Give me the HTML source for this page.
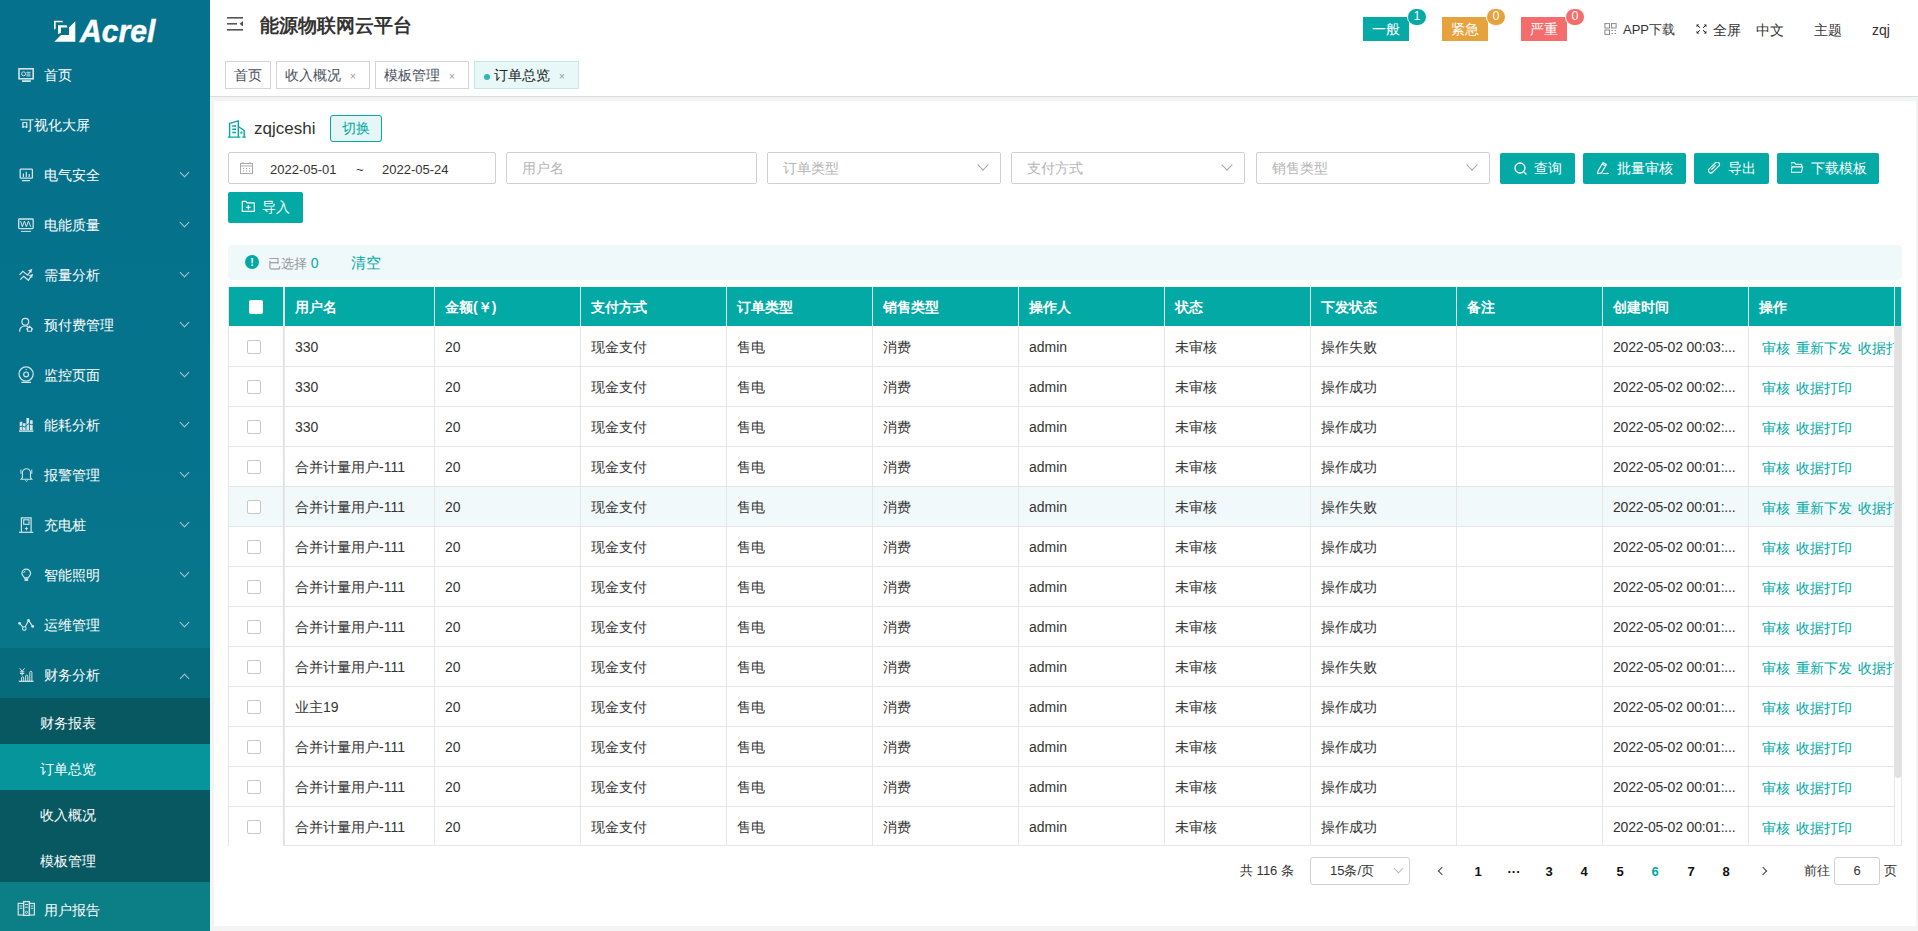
<!DOCTYPE html><html><head><meta charset="utf-8"><style>
*{box-sizing:border-box;margin:0;padding:0}
svg{display:block}
html,body{width:1918px;height:931px;overflow:hidden}
body{position:relative;background:#f4f4f5;font-family:"Liberation Sans",sans-serif;font-size:14px;color:#333}
.a{position:absolute}
.side{left:0;top:0;width:210px;height:931px;background:linear-gradient(#05718c,#06738c 50%,#08778a 70%,#0b7c87)}
.mi{position:absolute;left:0;width:210px;height:50px;color:#fff;font-size:14px}
.mi .t{position:absolute;left:44px;top:2px;line-height:50px;white-space:nowrap}
.mi .ar{position:absolute;left:180.5px;top:20.5px;width:7px;height:7px;border-right:1px solid #a9c8d1;border-bottom:1px solid #a9c8d1;transform:rotate(45deg)}
.sub{position:absolute;left:0;width:210px;height:46px;color:#fff;line-height:46px}
.sub .t{position:absolute;left:40px;top:2px}
.hdr{left:210px;top:0;width:1708px;height:97px;background:#fff;border-bottom:1px solid #d8dce5}
.card{left:214px;top:101px;width:1702px;height:825px;background:#fff}
.tab{position:absolute;top:61px;height:28px;border:1px solid #d5d5d5;background:#fff;color:#495060;font-size:14px;line-height:26px;padding-left:8px;white-space:nowrap}
.tab .x{position:absolute;font-size:10px;color:#999}
.inp{position:absolute;top:152px;height:32px;border:1px solid #d0d0d0;border-radius:2px;background:#fff}
.ph{position:absolute;left:15px;top:0;line-height:30px;color:#b4b4b4;font-size:14px}
.sel .arr{position:absolute;right:13px;top:8px;width:8px;height:8px;border-right:1px solid #a8a8a8;border-bottom:1px solid #a8a8a8;transform:rotate(45deg)}
.btn{position:absolute;top:153px;height:31px;background:#02a9a5;border-radius:2px;color:#fff;font-size:14px;line-height:31px;white-space:nowrap}
</style></head><body>
<div class="a side">
<div class="a" style="left:79.5px;top:13px;color:#fff;font:italic bold 32px/36px 'Liberation Sans',sans-serif;-webkit-text-stroke:0.5px #fff;transform-origin:0 0;transform:scaleX(0.94)">Acrel</div>
<div class="mi" style="top:48px;"><div class="ic"></div><div class="t" style="left:44px">首页</div></div>
<div class="mi" style="top:98px;"><div class="ic"></div><div class="t" style="left:20px">可视化大屏</div></div>
<div class="mi" style="top:148px;"><div class="ic"></div><div class="t" style="left:44px">电气安全</div><div class="ar"></div></div>
<div class="mi" style="top:198px;"><div class="ic"></div><div class="t" style="left:44px">电能质量</div><div class="ar"></div></div>
<div class="mi" style="top:248px;"><div class="ic"></div><div class="t" style="left:44px">需量分析</div><div class="ar"></div></div>
<div class="mi" style="top:298px;"><div class="ic"></div><div class="t" style="left:44px">预付费管理</div><div class="ar"></div></div>
<div class="mi" style="top:348px;"><div class="ic"></div><div class="t" style="left:44px">监控页面</div><div class="ar"></div></div>
<div class="mi" style="top:398px;"><div class="ic"></div><div class="t" style="left:44px">能耗分析</div><div class="ar"></div></div>
<div class="mi" style="top:448px;"><div class="ic"></div><div class="t" style="left:44px">报警管理</div><div class="ar"></div></div>
<div class="mi" style="top:498px;"><div class="ic"></div><div class="t" style="left:44px">充电桩</div><div class="ar"></div></div>
<div class="mi" style="top:548px;"><div class="ic"></div><div class="t" style="left:44px">智能照明</div><div class="ar"></div></div>
<div class="mi" style="top:598px;"><div class="ic"></div><div class="t" style="left:44px">运维管理</div><div class="ar"></div></div>
<div class="mi" style="top:648px;background:#066b7d;"><div class="ic"></div><div class="t" style="left:44px">财务分析</div><div class="ar" style="top:27px;transform:rotate(225deg)"></div></div>
<div class="sub" style="top:698px;background:#085862"><div class="t">财务报表</div></div>
<div class="sub" style="top:744px;background:#05959a"><div class="t">订单总览</div></div>
<div class="sub" style="top:790px;background:#085862"><div class="t">收入概况</div></div>
<div class="sub" style="top:836px;background:#085862"><div class="t">模板管理</div></div>
<div class="mi" style="top:882px;background:#0c7e86"><div class="t" style="top:3px">用户报告</div></div>
<svg class="a" style="left:0;top:0" width="210" height="931" viewBox="0 0 210 931"><g fill="#fff"><path d="M75.3 21.2V41.8H54.3L61 35H69V27.5Z"/><path d="M54 20.8H62.2L63.2 22.3H55.7V28.5L54 29.8Z"/><path d="M58 25.2H66.6L67.6 27.5H60.9V33L58 34.2Z"/></g><g fill="none" stroke="#d3e4e9" stroke-width="1.2"><rect x="19" y="68.8" width="14.2" height="10" stroke-width="1.6"/><path d="M22 81.1H30.8" stroke-width="1.8"/><circle cx="23.6" cy="73.8" r="2" stroke-width="1"/><path d="M26.5 72.3H30.5M26.5 74.1H30.5M26.5 75.9H30.5" stroke-width="1"/><rect x="20.2" y="169.2" width="12.2" height="9" rx="0.8" stroke-width="1.3"/><path d="M22 180.6H30M23.4 177V173.5M26.3 177V171.7M29.2 177V174"/><rect x="18.7" y="219" width="14.5" height="9.6" rx="0.8" stroke-width="1.3"/><path d="M21 231.4H31M20.6 221L22.4 226.8L24.4 221L26.4 226.8L28.4 221L30.8 226.8" stroke-width="1"/><path d="M19.5 274.8L22.9 271.4L27.7 275.2L30.6 271" stroke-width="1.2"/><path d="M27.9 270.4L32.3 268.7L31.3 273.1Z" fill="#d3e4e9" stroke="none"/><path d="M20.3 279.6L23.6 276.3L28.4 280.3L31.4 275.9" stroke-width="1.2"/><path d="M28.7 275.4L33.1 273.7L32.1 278.1Z" fill="#d3e4e9" stroke="none"/><circle cx="25.3" cy="321.8" r="3.4"/><path d="M19.6 331.8C19.6 328.2 22 326 25.3 326C26.3 326 27.2 326.2 28 326.6"/><path d="M26.2 329.4L29.6 326.3L33 329.4M27.6 328.2V331.2H31.6V328.2" stroke-width="1.1"/><circle cx="26.1" cy="374" r="7.1"/><circle cx="26.1" cy="374.4" r="2.4"/><path d="M21.3 382.4H31M25.6 369.5H26.8"/><path d="M19 431.1H33.4" stroke-width="1.5"/><g fill="#d3e4e9" stroke="none"><rect x="19.7" y="421.8" width="2.7" height="8.2"/><rect x="23" y="423.2" width="2.6" height="6.8"/><rect x="26.4" y="418" width="2.7" height="12"/><rect x="30" y="420.2" width="2.7" height="9.8"/></g><path d="M19.4 426.6L22.6 426.2L25.2 427.2L28.2 423.8L31.4 424.6L33.2 424.3" stroke="#05718c" stroke-width="0.9"/><path d="M22.4 477.6V472.8A4.05 4.05 0 0 1 30.5 472.8V477.6L31.8 479.2H21.1Z" stroke-width="1.1"/><path d="M25.3 480.6Q26.45 481.9 27.6 480.6M20.9 469.6V473.8M31.8 469.6V473.8" stroke-width="1"/><path d="M21.4 532V517.8H31.1V532" stroke-width="1.2"/><rect x="23.7" y="519.8" width="5.3" height="4.5" stroke-width="1.1"/><path d="M26.4 526.2L27 528L28.4 528.6L27 529.2L26.4 531L25.8 529.2L24.4 528.6L25.8 528Z" fill="#d3e4e9" stroke="none"/><path d="M19 532.3H33.3" stroke-width="1.2"/><path d="M24.6 577.9C23.9 576.6 21.9 575.3 21.9 573.5A4.35 4.35 0 0 1 30.6 573.5C30.6 575.3 28.7 576.6 28 577.9Z" stroke-width="1.2"/><rect x="24.5" y="578.3" width="3.6" height="2.6" fill="#d3e4e9" stroke="none"/><path d="M23.7 572.9A2.4 2.4 0 0 1 25.5 571" stroke-width="1"/><path d="M19.6 623.3L23 627.2M25.2 626.9L28.5 620.4L32.7 626.4" stroke-width="1.1"/><circle cx="24.3" cy="628.6" r="1.8" stroke-width="1.1"/><circle cx="19.6" cy="623.3" r="1.4" fill="#d3e4e9" stroke="none"/><circle cx="28.5" cy="620.4" r="1.4" fill="#d3e4e9" stroke="none"/><circle cx="32.7" cy="626.4" r="1.4" fill="#d3e4e9" stroke="none"/><path d="M18.8 681.3H33.5" stroke-width="1.3"/><path d="M21.6 681V677.9A1.05 1.05 0 0 1 23.7 677.9V681M25.7 681V676.1A1.05 1.05 0 0 1 27.8 676.1V681M29.8 681V672.3A1.05 1.05 0 0 1 31.9 672.3V681" stroke-width="1"/><path d="M19.6 668.3L22.1 671.2L24.6 668.3M22.1 671.2V675.6M19.9 671.8H24.3M19.9 673.5H24.3" stroke-width="1"/><rect x="23.6" y="901.6" width="5.8" height="13.8" stroke-width="1.3"/><rect x="18.2" y="903.4" width="5.4" height="11.6"/><rect x="29.4" y="903.4" width="5" height="11.6"/><path d="M25 904.5H28M25 907.2H28M19.6 906H22.2M30.8 906H33.2M19.6 908.3H22.2M30.8 908.3H33.2" stroke-width="1"/><circle cx="26.5" cy="912.3" r="1.1" stroke-width="0.9"/></g></svg>
</div>
<div class="a hdr"></div>
<div class="a" style="left:227px;top:17px;width:16px;height:14px"><svg width="16" height="14" viewBox="0 0 16 14"><rect x="0" y="0" width="16" height="1.6" fill="#555"/><rect x="0" y="6" width="10" height="1.6" fill="#555"/><rect x="0" y="12" width="16" height="1.6" fill="#555"/><path d="M16 4L12.5 6.8 16 9.6z" fill="#555"/></svg></div>
<div class="a" style="left:260px;top:13px;font-size:19px;font-weight:bold;line-height:26px;color:#333">能源物联网云平台</div>
<div class="tab" style="left:225px;width:46px;">首页</div>
<div class="tab" style="left:276px;width:94px;">收入概况<span class="x" style="left:73px;top:2px">×</span></div>
<div class="tab" style="left:375px;width:94px;">模板管理<span class="x" style="left:73px;top:2px">×</span></div>
<div class="tab" style="left:474px;width:105px;background:#e8f7f7;border-color:#c2e9e7;color:#222;padding-left:19px;"><span class="a" style="left:8.5px;top:11.5px;width:6px;height:6px;border-radius:50%;background:#2fb7b1"></span>订单总览<span class="x" style="left:84px;top:2px">×</span></div>
<div class="a" style="left:1363px;top:17px;width:46px;height:24px;background:#05a9a5;color:#fff;font-size:14px;line-height:24px;text-align:center">一般</div>
<div class="a" style="left:1407px;top:8px;width:20px;height:18px;border-radius:9px;background:#05a9a5;border:1px solid #fff;color:#fff;font-size:12.5px;line-height:15px;text-align:center">1</div>
<div class="a" style="left:1442px;top:17px;width:46px;height:24px;background:#e6a23c;color:#fff;font-size:14px;line-height:24px;text-align:center">紧急</div>
<div class="a" style="left:1486px;top:8px;width:20px;height:18px;border-radius:9px;background:#e6a23c;border:1px solid #fff;color:#fff;font-size:12.5px;line-height:15px;text-align:center">0</div>
<div class="a" style="left:1521px;top:17px;width:46px;height:24px;background:#f56c6c;color:#fff;font-size:14px;line-height:24px;text-align:center">严重</div>
<div class="a" style="left:1565px;top:8px;width:20px;height:18px;border-radius:9px;background:#f56c6c;border:1px solid #fff;color:#fff;font-size:12.5px;line-height:15px;text-align:center">0</div>
<div class="a" style="left:1604px;top:23px;width:13px;height:12px"><svg style="display:block" width="13" height="12" viewBox="0 0 13 12" fill="none" stroke="#8a8a8a" stroke-width="1"><rect x=".9" y=".6" width="4.6" height="4.4"/><rect x="7.5" y=".6" width="4.6" height="4.4"/><rect x=".9" y="7" width="4.6" height="4.4"/><path d="M7.5 7.5h1.5M10.5 7.5h1.5M7.5 10.5h1.5M10.5 10.5h1.5" stroke-width="1.2"/></svg></div>
<div class="a" style="left:1623px;top:21px;font-size:13px;line-height:18px;color:#333">APP下载</div>
<svg class="a" style="left:1696px;top:24px" width="11" height="10" viewBox="0 0 11 10" fill="none" stroke="#222" stroke-width="1"><path d="M1.2 1.2L4 3.8M10 1.2L7 3.8M1.2 8.8L4 6.2M10 8.8L7 6.2"/><path d="M.6 .6h2.6L.6 3.2z M10.4 .6h-2.6l2.6 2.6z M.6 9.4h2.6L.6 6.8z M10.4 9.4h-2.6l2.6-2.6z" fill="#222" stroke="none"/></svg>
<div class="a" style="left:1713px;top:21px;font-size:14px;line-height:18px;color:#333">全屏</div>
<div class="a" style="left:1756px;top:21px;font-size:14px;line-height:18px;color:#333">中文</div>
<div class="a" style="left:1814px;top:21px;font-size:14px;line-height:18px;color:#333">主题</div>
<div class="a" style="left:1872px;top:21px;font-size:14px;line-height:18px;color:#333">zqj</div>
<div class="a card"></div>
<svg class="a" style="left:224px;top:116px" width="26" height="24" viewBox="0 0 26 24" fill="none" stroke="#02a9a5" stroke-width="1.4"><path d="M5.6 20.8V7.4L14.3 4.8V20.8M14.3 10.5L20.2 14.5V20.8M4 21.1H16.4M18.2 21.1H21.8" stroke-linejoin="round"/><path d="M8.3 10H12M8.3 13.3H12M8.3 16.4H12" stroke-width="1.5"/><circle cx="17.4" cy="16.6" r=".5"/></svg>
<div class="a" style="left:254px;top:117px;font-size:17px;line-height:24px;color:#333">zqjceshi</div>
<div class="a" style="left:330px;top:115px;width:52px;height:27px;border:1px solid #02a9a5;border-radius:3px;background:#e6f6f6;color:#02a9a5;font-size:14px;line-height:25px;text-align:center">切换</div>
<div class="inp" style="left:228px;width:268px"><div class="a" style="left:11px;top:9px;width:13px;height:12px"><svg width="13" height="12" viewBox="0 0 13 12" fill="none" stroke="#aaa" stroke-width="1"><rect x=".5" y="1.5" width="12" height="10"/><path d="M.5 4h12M3 0v2M10 0v2M3 6.5h1M6 6.5h1M9 6.5h1M3 9h1M6 9h1M9 9h1"/></svg></div><div class="a" style="left:41px;top:2px;line-height:30px;font-size:13px;color:#333">2022-05-01</div><div class="a" style="left:127px;top:2px;line-height:30px;font-size:13px;color:#333">~</div><div class="a" style="left:153px;top:2px;line-height:30px;font-size:13px;color:#333">2022-05-24</div></div>
<div class="inp" style="left:506px;width:251px"><div class="ph">用户名</div></div>
<div class="inp sel" style="left:767px;width:234px"><div class="ph">订单类型</div><div class="arr"></div></div>
<div class="inp sel" style="left:1011px;width:234px"><div class="ph">支付方式</div><div class="arr"></div></div>
<div class="inp sel" style="left:1256px;width:234px"><div class="ph">销售类型</div><div class="arr"></div></div>
<div class="btn" style="left:1500px;width:75px"><svg class="a" style="left:14px;top:9px" width="14" height="14" viewBox="0 0 14 14" fill="none" stroke="#fff" stroke-width="1.3"><circle cx="6" cy="6" r="5"/><path d="M10 10l2.5 2.5"/></svg><span class="a" style="left:34px;top:0">查询</span></div>
<div class="btn" style="left:1583px;width:103px"><svg class="a" style="left:14px;top:9px" width="14" height="14" viewBox="0 0 14 14" fill="none" stroke="#fff" stroke-width="1.3"><path d="M0.7 11.7L1.1 8.9L6 0.5L9.4 2.5L4.5 10.9Z M5.3 2L8.6 3.9" stroke-width="1.1" stroke-linejoin="round"/><path d="M5.6 11.5H12" stroke-width="1.1"/></svg><span class="a" style="left:34px;top:0">批量审核</span></div>
<div class="btn" style="left:1694px;width:75px"><svg class="a" style="left:14px;top:9px" width="14" height="14" viewBox="0 0 14 14" fill="none" stroke="#fff" stroke-width="1.3"><path d="M2.9 8.6L9.1 2.4" stroke-width="5.8" stroke-linecap="round"/><path d="M2.9 8.6L9.1 2.4" stroke="#02a9a5" stroke-width="3.6" stroke-linecap="round"/><path d="M3.4 7.6L7.6 3.4" stroke-width="1.2"/></svg><span class="a" style="left:34px;top:0">导出</span></div>
<div class="btn" style="left:1777px;width:102px"><svg class="a" style="left:14px;top:9px" width="14" height="14" viewBox="0 0 14 14" fill="none" stroke="#fff" stroke-width="1.3"><path d="M-0.2 10.2V0.8H3.6L5 2.4H10.6V4.6" stroke-width="1.1" stroke-linejoin="round"/><path d="M-0.2 10.2L1.2 4.9H11.8L10.4 10.2Z" stroke-width="1.1" stroke-linejoin="round"/></svg><span class="a" style="left:34px;top:0">下载模板</span></div>
<div class="btn" style="left:228px;top:192px;width:75px"><svg class="a" style="left:13px;top:8px" width="14" height="14" viewBox="0 0 14 14" fill="none" stroke="#fff" stroke-width="1.3"><path d="M1.3 1.3H4.8L6.2 2.9H13.3V11.4H1.3Z" stroke-width="1.2" stroke-linejoin="round"/><path d="M7.3 4.9V9.7M4.9 7.3H9.7" stroke-width="1.1"/></svg><span class="a" style="left:34px;top:0">导入</span></div>
<div class="a" style="left:228px;top:245px;width:1674px;height:35px;background:#f0f9fa;border-radius:4px"></div>
<div class="a" style="left:245px;top:255px;width:14px;height:14px;border-radius:50%;background:#02a9a5;color:#fff;font-size:11px;font-weight:bold;line-height:14px;text-align:center">!</div>
<div class="a" style="left:268px;top:254px;font-size:13px;line-height:18px;color:#909399">已选择 <span style="color:#02a9a5;font-size:14px">0</span></div>
<div class="a" style="left:351px;top:253px;font-size:15px;line-height:20px;color:#02a9a5">清空</div>
<div class="a" style="left:228px;top:287px;width:1673px;height:39px;background:#02a9a5"></div>
<div class="a" style="left:295px;top:288px;line-height:39px;color:#fff;font-weight:bold;font-size:14px">用户名</div>
<div class="a" style="left:445px;top:288px;line-height:39px;color:#fff;font-weight:bold;font-size:14px">金额(￥)</div>
<div class="a" style="left:591px;top:288px;line-height:39px;color:#fff;font-weight:bold;font-size:14px">支付方式</div>
<div class="a" style="left:737px;top:288px;line-height:39px;color:#fff;font-weight:bold;font-size:14px">订单类型</div>
<div class="a" style="left:883px;top:288px;line-height:39px;color:#fff;font-weight:bold;font-size:14px">销售类型</div>
<div class="a" style="left:1029px;top:288px;line-height:39px;color:#fff;font-weight:bold;font-size:14px">操作人</div>
<div class="a" style="left:1175px;top:288px;line-height:39px;color:#fff;font-weight:bold;font-size:14px">状态</div>
<div class="a" style="left:1321px;top:288px;line-height:39px;color:#fff;font-weight:bold;font-size:14px">下发状态</div>
<div class="a" style="left:1467px;top:288px;line-height:39px;color:#fff;font-weight:bold;font-size:14px">备注</div>
<div class="a" style="left:1613px;top:288px;line-height:39px;color:#fff;font-weight:bold;font-size:14px">创建时间</div>
<div class="a" style="left:1759px;top:288px;line-height:39px;color:#fff;font-weight:bold;font-size:14px">操作</div>
<div class="a" style="left:284px;top:287px;width:1px;height:39px;background:#e2e2e2"></div>
<div class="a" style="left:434px;top:287px;width:1px;height:39px;background:#e2e2e2"></div>
<div class="a" style="left:580px;top:287px;width:1px;height:39px;background:#e2e2e2"></div>
<div class="a" style="left:726px;top:287px;width:1px;height:39px;background:#e2e2e2"></div>
<div class="a" style="left:872px;top:287px;width:1px;height:39px;background:#e2e2e2"></div>
<div class="a" style="left:1018px;top:287px;width:1px;height:39px;background:#e2e2e2"></div>
<div class="a" style="left:1164px;top:287px;width:1px;height:39px;background:#e2e2e2"></div>
<div class="a" style="left:1310px;top:287px;width:1px;height:39px;background:#e2e2e2"></div>
<div class="a" style="left:1456px;top:287px;width:1px;height:39px;background:#e2e2e2"></div>
<div class="a" style="left:1602px;top:287px;width:1px;height:39px;background:#e2e2e2"></div>
<div class="a" style="left:1748px;top:287px;width:1px;height:39px;background:#e2e2e2"></div>
<div class="a" style="left:1894px;top:287px;width:1px;height:39px;background:#e2e2e2"></div>
<div class="a" style="left:249px;top:300px;width:14px;height:14px;background:#fff;border-radius:2px"></div>
<div class="a" style="left:228px;top:366px;width:1666px;height:1px;background:#e6e6e6"></div>
<div class="a" style="left:247px;top:340px;width:14px;height:14px;border:1px solid #c8c8c8;border-radius:2px;background:#fff"></div>
<div class="a" style="left:295px;top:327px;line-height:40px;color:#333;">330</div>
<div class="a" style="left:445px;top:327px;line-height:40px;color:#333;">20</div>
<div class="a" style="left:591px;top:327px;line-height:40px;color:#333;">现金支付</div>
<div class="a" style="left:737px;top:327px;line-height:40px;color:#333;">售电</div>
<div class="a" style="left:883px;top:327px;line-height:40px;color:#333;">消费</div>
<div class="a" style="left:1029px;top:327px;line-height:40px;color:#333;">admin</div>
<div class="a" style="left:1175px;top:327px;line-height:40px;color:#333;">未审核</div>
<div class="a" style="left:1321px;top:327px;line-height:40px;color:#333;">操作失败</div>
<div class="a" style="left:1467px;top:327px;line-height:40px;color:#333;"></div>
<div class="a" style="left:1613px;top:327px;line-height:40px;color:#333;letter-spacing:-0.18px;">2022-05-02 00:03:...</div>
<div class="a" style="left:1762px;top:328px;width:132px;overflow:hidden;white-space:nowrap;line-height:40px;color:#02a9a5"><span style="margin-right:6px">审核</span><span style="margin-right:6px">重新下发</span><span style="margin-right:6px">收据打印</span></div>
<div class="a" style="left:228px;top:406px;width:1666px;height:1px;background:#e6e6e6"></div>
<div class="a" style="left:247px;top:380px;width:14px;height:14px;border:1px solid #c8c8c8;border-radius:2px;background:#fff"></div>
<div class="a" style="left:295px;top:367px;line-height:40px;color:#333;">330</div>
<div class="a" style="left:445px;top:367px;line-height:40px;color:#333;">20</div>
<div class="a" style="left:591px;top:367px;line-height:40px;color:#333;">现金支付</div>
<div class="a" style="left:737px;top:367px;line-height:40px;color:#333;">售电</div>
<div class="a" style="left:883px;top:367px;line-height:40px;color:#333;">消费</div>
<div class="a" style="left:1029px;top:367px;line-height:40px;color:#333;">admin</div>
<div class="a" style="left:1175px;top:367px;line-height:40px;color:#333;">未审核</div>
<div class="a" style="left:1321px;top:367px;line-height:40px;color:#333;">操作成功</div>
<div class="a" style="left:1467px;top:367px;line-height:40px;color:#333;"></div>
<div class="a" style="left:1613px;top:367px;line-height:40px;color:#333;letter-spacing:-0.18px;">2022-05-02 00:02:...</div>
<div class="a" style="left:1762px;top:368px;width:132px;overflow:hidden;white-space:nowrap;line-height:40px;color:#02a9a5"><span style="margin-right:6px">审核</span><span style="margin-right:6px">收据打印</span></div>
<div class="a" style="left:228px;top:446px;width:1666px;height:1px;background:#e6e6e6"></div>
<div class="a" style="left:247px;top:420px;width:14px;height:14px;border:1px solid #c8c8c8;border-radius:2px;background:#fff"></div>
<div class="a" style="left:295px;top:407px;line-height:40px;color:#333;">330</div>
<div class="a" style="left:445px;top:407px;line-height:40px;color:#333;">20</div>
<div class="a" style="left:591px;top:407px;line-height:40px;color:#333;">现金支付</div>
<div class="a" style="left:737px;top:407px;line-height:40px;color:#333;">售电</div>
<div class="a" style="left:883px;top:407px;line-height:40px;color:#333;">消费</div>
<div class="a" style="left:1029px;top:407px;line-height:40px;color:#333;">admin</div>
<div class="a" style="left:1175px;top:407px;line-height:40px;color:#333;">未审核</div>
<div class="a" style="left:1321px;top:407px;line-height:40px;color:#333;">操作成功</div>
<div class="a" style="left:1467px;top:407px;line-height:40px;color:#333;"></div>
<div class="a" style="left:1613px;top:407px;line-height:40px;color:#333;letter-spacing:-0.18px;">2022-05-02 00:02:...</div>
<div class="a" style="left:1762px;top:408px;width:132px;overflow:hidden;white-space:nowrap;line-height:40px;color:#02a9a5"><span style="margin-right:6px">审核</span><span style="margin-right:6px">收据打印</span></div>
<div class="a" style="left:228px;top:486px;width:1666px;height:1px;background:#e6e6e6"></div>
<div class="a" style="left:247px;top:460px;width:14px;height:14px;border:1px solid #c8c8c8;border-radius:2px;background:#fff"></div>
<div class="a" style="left:295px;top:447px;line-height:40px;color:#333;">合并计量用户-111</div>
<div class="a" style="left:445px;top:447px;line-height:40px;color:#333;">20</div>
<div class="a" style="left:591px;top:447px;line-height:40px;color:#333;">现金支付</div>
<div class="a" style="left:737px;top:447px;line-height:40px;color:#333;">售电</div>
<div class="a" style="left:883px;top:447px;line-height:40px;color:#333;">消费</div>
<div class="a" style="left:1029px;top:447px;line-height:40px;color:#333;">admin</div>
<div class="a" style="left:1175px;top:447px;line-height:40px;color:#333;">未审核</div>
<div class="a" style="left:1321px;top:447px;line-height:40px;color:#333;">操作成功</div>
<div class="a" style="left:1467px;top:447px;line-height:40px;color:#333;"></div>
<div class="a" style="left:1613px;top:447px;line-height:40px;color:#333;letter-spacing:-0.18px;">2022-05-02 00:01:...</div>
<div class="a" style="left:1762px;top:448px;width:132px;overflow:hidden;white-space:nowrap;line-height:40px;color:#02a9a5"><span style="margin-right:6px">审核</span><span style="margin-right:6px">收据打印</span></div>
<div class="a" style="left:228px;top:487px;width:1666px;height:39px;background:#f2f9fa"></div>
<div class="a" style="left:228px;top:526px;width:1666px;height:1px;background:#e6e6e6"></div>
<div class="a" style="left:247px;top:500px;width:14px;height:14px;border:1px solid #c8c8c8;border-radius:2px;background:#fff"></div>
<div class="a" style="left:295px;top:487px;line-height:40px;color:#333;">合并计量用户-111</div>
<div class="a" style="left:445px;top:487px;line-height:40px;color:#333;">20</div>
<div class="a" style="left:591px;top:487px;line-height:40px;color:#333;">现金支付</div>
<div class="a" style="left:737px;top:487px;line-height:40px;color:#333;">售电</div>
<div class="a" style="left:883px;top:487px;line-height:40px;color:#333;">消费</div>
<div class="a" style="left:1029px;top:487px;line-height:40px;color:#333;">admin</div>
<div class="a" style="left:1175px;top:487px;line-height:40px;color:#333;">未审核</div>
<div class="a" style="left:1321px;top:487px;line-height:40px;color:#333;">操作失败</div>
<div class="a" style="left:1467px;top:487px;line-height:40px;color:#333;"></div>
<div class="a" style="left:1613px;top:487px;line-height:40px;color:#333;letter-spacing:-0.18px;">2022-05-02 00:01:...</div>
<div class="a" style="left:1762px;top:488px;width:132px;overflow:hidden;white-space:nowrap;line-height:40px;color:#02a9a5"><span style="margin-right:6px">审核</span><span style="margin-right:6px">重新下发</span><span style="margin-right:6px">收据打印</span></div>
<div class="a" style="left:228px;top:566px;width:1666px;height:1px;background:#e6e6e6"></div>
<div class="a" style="left:247px;top:540px;width:14px;height:14px;border:1px solid #c8c8c8;border-radius:2px;background:#fff"></div>
<div class="a" style="left:295px;top:527px;line-height:40px;color:#333;">合并计量用户-111</div>
<div class="a" style="left:445px;top:527px;line-height:40px;color:#333;">20</div>
<div class="a" style="left:591px;top:527px;line-height:40px;color:#333;">现金支付</div>
<div class="a" style="left:737px;top:527px;line-height:40px;color:#333;">售电</div>
<div class="a" style="left:883px;top:527px;line-height:40px;color:#333;">消费</div>
<div class="a" style="left:1029px;top:527px;line-height:40px;color:#333;">admin</div>
<div class="a" style="left:1175px;top:527px;line-height:40px;color:#333;">未审核</div>
<div class="a" style="left:1321px;top:527px;line-height:40px;color:#333;">操作成功</div>
<div class="a" style="left:1467px;top:527px;line-height:40px;color:#333;"></div>
<div class="a" style="left:1613px;top:527px;line-height:40px;color:#333;letter-spacing:-0.18px;">2022-05-02 00:01:...</div>
<div class="a" style="left:1762px;top:528px;width:132px;overflow:hidden;white-space:nowrap;line-height:40px;color:#02a9a5"><span style="margin-right:6px">审核</span><span style="margin-right:6px">收据打印</span></div>
<div class="a" style="left:228px;top:606px;width:1666px;height:1px;background:#e6e6e6"></div>
<div class="a" style="left:247px;top:580px;width:14px;height:14px;border:1px solid #c8c8c8;border-radius:2px;background:#fff"></div>
<div class="a" style="left:295px;top:567px;line-height:40px;color:#333;">合并计量用户-111</div>
<div class="a" style="left:445px;top:567px;line-height:40px;color:#333;">20</div>
<div class="a" style="left:591px;top:567px;line-height:40px;color:#333;">现金支付</div>
<div class="a" style="left:737px;top:567px;line-height:40px;color:#333;">售电</div>
<div class="a" style="left:883px;top:567px;line-height:40px;color:#333;">消费</div>
<div class="a" style="left:1029px;top:567px;line-height:40px;color:#333;">admin</div>
<div class="a" style="left:1175px;top:567px;line-height:40px;color:#333;">未审核</div>
<div class="a" style="left:1321px;top:567px;line-height:40px;color:#333;">操作成功</div>
<div class="a" style="left:1467px;top:567px;line-height:40px;color:#333;"></div>
<div class="a" style="left:1613px;top:567px;line-height:40px;color:#333;letter-spacing:-0.18px;">2022-05-02 00:01:...</div>
<div class="a" style="left:1762px;top:568px;width:132px;overflow:hidden;white-space:nowrap;line-height:40px;color:#02a9a5"><span style="margin-right:6px">审核</span><span style="margin-right:6px">收据打印</span></div>
<div class="a" style="left:228px;top:646px;width:1666px;height:1px;background:#e6e6e6"></div>
<div class="a" style="left:247px;top:620px;width:14px;height:14px;border:1px solid #c8c8c8;border-radius:2px;background:#fff"></div>
<div class="a" style="left:295px;top:607px;line-height:40px;color:#333;">合并计量用户-111</div>
<div class="a" style="left:445px;top:607px;line-height:40px;color:#333;">20</div>
<div class="a" style="left:591px;top:607px;line-height:40px;color:#333;">现金支付</div>
<div class="a" style="left:737px;top:607px;line-height:40px;color:#333;">售电</div>
<div class="a" style="left:883px;top:607px;line-height:40px;color:#333;">消费</div>
<div class="a" style="left:1029px;top:607px;line-height:40px;color:#333;">admin</div>
<div class="a" style="left:1175px;top:607px;line-height:40px;color:#333;">未审核</div>
<div class="a" style="left:1321px;top:607px;line-height:40px;color:#333;">操作成功</div>
<div class="a" style="left:1467px;top:607px;line-height:40px;color:#333;"></div>
<div class="a" style="left:1613px;top:607px;line-height:40px;color:#333;letter-spacing:-0.18px;">2022-05-02 00:01:...</div>
<div class="a" style="left:1762px;top:608px;width:132px;overflow:hidden;white-space:nowrap;line-height:40px;color:#02a9a5"><span style="margin-right:6px">审核</span><span style="margin-right:6px">收据打印</span></div>
<div class="a" style="left:228px;top:686px;width:1666px;height:1px;background:#e6e6e6"></div>
<div class="a" style="left:247px;top:660px;width:14px;height:14px;border:1px solid #c8c8c8;border-radius:2px;background:#fff"></div>
<div class="a" style="left:295px;top:647px;line-height:40px;color:#333;">合并计量用户-111</div>
<div class="a" style="left:445px;top:647px;line-height:40px;color:#333;">20</div>
<div class="a" style="left:591px;top:647px;line-height:40px;color:#333;">现金支付</div>
<div class="a" style="left:737px;top:647px;line-height:40px;color:#333;">售电</div>
<div class="a" style="left:883px;top:647px;line-height:40px;color:#333;">消费</div>
<div class="a" style="left:1029px;top:647px;line-height:40px;color:#333;">admin</div>
<div class="a" style="left:1175px;top:647px;line-height:40px;color:#333;">未审核</div>
<div class="a" style="left:1321px;top:647px;line-height:40px;color:#333;">操作失败</div>
<div class="a" style="left:1467px;top:647px;line-height:40px;color:#333;"></div>
<div class="a" style="left:1613px;top:647px;line-height:40px;color:#333;letter-spacing:-0.18px;">2022-05-02 00:01:...</div>
<div class="a" style="left:1762px;top:648px;width:132px;overflow:hidden;white-space:nowrap;line-height:40px;color:#02a9a5"><span style="margin-right:6px">审核</span><span style="margin-right:6px">重新下发</span><span style="margin-right:6px">收据打印</span></div>
<div class="a" style="left:228px;top:726px;width:1666px;height:1px;background:#e6e6e6"></div>
<div class="a" style="left:247px;top:700px;width:14px;height:14px;border:1px solid #c8c8c8;border-radius:2px;background:#fff"></div>
<div class="a" style="left:295px;top:687px;line-height:40px;color:#333;">业主19</div>
<div class="a" style="left:445px;top:687px;line-height:40px;color:#333;">20</div>
<div class="a" style="left:591px;top:687px;line-height:40px;color:#333;">现金支付</div>
<div class="a" style="left:737px;top:687px;line-height:40px;color:#333;">售电</div>
<div class="a" style="left:883px;top:687px;line-height:40px;color:#333;">消费</div>
<div class="a" style="left:1029px;top:687px;line-height:40px;color:#333;">admin</div>
<div class="a" style="left:1175px;top:687px;line-height:40px;color:#333;">未审核</div>
<div class="a" style="left:1321px;top:687px;line-height:40px;color:#333;">操作成功</div>
<div class="a" style="left:1467px;top:687px;line-height:40px;color:#333;"></div>
<div class="a" style="left:1613px;top:687px;line-height:40px;color:#333;letter-spacing:-0.18px;">2022-05-02 00:01:...</div>
<div class="a" style="left:1762px;top:688px;width:132px;overflow:hidden;white-space:nowrap;line-height:40px;color:#02a9a5"><span style="margin-right:6px">审核</span><span style="margin-right:6px">收据打印</span></div>
<div class="a" style="left:228px;top:766px;width:1666px;height:1px;background:#e6e6e6"></div>
<div class="a" style="left:247px;top:740px;width:14px;height:14px;border:1px solid #c8c8c8;border-radius:2px;background:#fff"></div>
<div class="a" style="left:295px;top:727px;line-height:40px;color:#333;">合并计量用户-111</div>
<div class="a" style="left:445px;top:727px;line-height:40px;color:#333;">20</div>
<div class="a" style="left:591px;top:727px;line-height:40px;color:#333;">现金支付</div>
<div class="a" style="left:737px;top:727px;line-height:40px;color:#333;">售电</div>
<div class="a" style="left:883px;top:727px;line-height:40px;color:#333;">消费</div>
<div class="a" style="left:1029px;top:727px;line-height:40px;color:#333;">admin</div>
<div class="a" style="left:1175px;top:727px;line-height:40px;color:#333;">未审核</div>
<div class="a" style="left:1321px;top:727px;line-height:40px;color:#333;">操作成功</div>
<div class="a" style="left:1467px;top:727px;line-height:40px;color:#333;"></div>
<div class="a" style="left:1613px;top:727px;line-height:40px;color:#333;letter-spacing:-0.18px;">2022-05-02 00:01:...</div>
<div class="a" style="left:1762px;top:728px;width:132px;overflow:hidden;white-space:nowrap;line-height:40px;color:#02a9a5"><span style="margin-right:6px">审核</span><span style="margin-right:6px">收据打印</span></div>
<div class="a" style="left:228px;top:806px;width:1666px;height:1px;background:#e6e6e6"></div>
<div class="a" style="left:247px;top:780px;width:14px;height:14px;border:1px solid #c8c8c8;border-radius:2px;background:#fff"></div>
<div class="a" style="left:295px;top:767px;line-height:40px;color:#333;">合并计量用户-111</div>
<div class="a" style="left:445px;top:767px;line-height:40px;color:#333;">20</div>
<div class="a" style="left:591px;top:767px;line-height:40px;color:#333;">现金支付</div>
<div class="a" style="left:737px;top:767px;line-height:40px;color:#333;">售电</div>
<div class="a" style="left:883px;top:767px;line-height:40px;color:#333;">消费</div>
<div class="a" style="left:1029px;top:767px;line-height:40px;color:#333;">admin</div>
<div class="a" style="left:1175px;top:767px;line-height:40px;color:#333;">未审核</div>
<div class="a" style="left:1321px;top:767px;line-height:40px;color:#333;">操作成功</div>
<div class="a" style="left:1467px;top:767px;line-height:40px;color:#333;"></div>
<div class="a" style="left:1613px;top:767px;line-height:40px;color:#333;letter-spacing:-0.18px;">2022-05-02 00:01:...</div>
<div class="a" style="left:1762px;top:768px;width:132px;overflow:hidden;white-space:nowrap;line-height:40px;color:#02a9a5"><span style="margin-right:6px">审核</span><span style="margin-right:6px">收据打印</span></div>
<div class="a" style="left:247px;top:820px;width:14px;height:14px;border:1px solid #c8c8c8;border-radius:2px;background:#fff"></div>
<div class="a" style="left:295px;top:807px;line-height:40px;color:#333;">合并计量用户-111</div>
<div class="a" style="left:445px;top:807px;line-height:40px;color:#333;">20</div>
<div class="a" style="left:591px;top:807px;line-height:40px;color:#333;">现金支付</div>
<div class="a" style="left:737px;top:807px;line-height:40px;color:#333;">售电</div>
<div class="a" style="left:883px;top:807px;line-height:40px;color:#333;">消费</div>
<div class="a" style="left:1029px;top:807px;line-height:40px;color:#333;">admin</div>
<div class="a" style="left:1175px;top:807px;line-height:40px;color:#333;">未审核</div>
<div class="a" style="left:1321px;top:807px;line-height:40px;color:#333;">操作成功</div>
<div class="a" style="left:1467px;top:807px;line-height:40px;color:#333;"></div>
<div class="a" style="left:1613px;top:807px;line-height:40px;color:#333;letter-spacing:-0.18px;">2022-05-02 00:01:...</div>
<div class="a" style="left:1762px;top:808px;width:132px;overflow:hidden;white-space:nowrap;line-height:40px;color:#02a9a5"><span style="margin-right:6px">审核</span><span style="margin-right:6px">收据打印</span></div>
<div class="a" style="left:284px;top:326px;width:1px;height:520px;background:#e6e6e6"></div>
<div class="a" style="left:434px;top:326px;width:1px;height:520px;background:#e6e6e6"></div>
<div class="a" style="left:580px;top:326px;width:1px;height:520px;background:#e6e6e6"></div>
<div class="a" style="left:726px;top:326px;width:1px;height:520px;background:#e6e6e6"></div>
<div class="a" style="left:872px;top:326px;width:1px;height:520px;background:#e6e6e6"></div>
<div class="a" style="left:1018px;top:326px;width:1px;height:520px;background:#e6e6e6"></div>
<div class="a" style="left:1164px;top:326px;width:1px;height:520px;background:#e6e6e6"></div>
<div class="a" style="left:1310px;top:326px;width:1px;height:520px;background:#e6e6e6"></div>
<div class="a" style="left:1456px;top:326px;width:1px;height:520px;background:#e6e6e6"></div>
<div class="a" style="left:1602px;top:326px;width:1px;height:520px;background:#e6e6e6"></div>
<div class="a" style="left:1748px;top:326px;width:1px;height:520px;background:#e6e6e6"></div>
<div class="a" style="left:1894px;top:326px;width:1px;height:520px;background:#e6e6e6"></div>
<div class="a" style="left:283px;top:287px;width:1px;height:559px;background:#e0e0e0"></div>
<div class="a" style="left:228px;top:287px;width:1px;height:559px;background:#e6e6e6"></div>
<div class="a" style="left:284px;top:845px;width:1618px;height:1px;background:#e6e6e6"></div>
<div class="a" style="left:1901px;top:287px;width:1px;height:559px;background:#e6e6e6"></div>
<div class="a" style="left:1895px;top:326px;width:6px;height:452px;background:#e1e1e1;border-radius:0 0 3px 3px"></div>
<div class="a" style="left:1240px;top:862px;font-size:13px;line-height:18px;color:#333">共 116 条</div>
<div class="a" style="left:1310px;top:857px;width:100px;height:28px;border:1px solid #d0d0d0;border-radius:3px"><span class="a" style="left:19px;top:0;line-height:26px;font-size:13px">15条/页</span><span class="a" style="left:84px;top:7px;width:7px;height:7px;border-right:1px solid #bbb;border-bottom:1px solid #bbb;transform:rotate(45deg)"></span></div>
<div class="a" style="left:1439px;top:868px;width:6px;height:6px;border-left:1px solid #444;border-bottom:1px solid #444;transform:rotate(45deg)"></div>
<div class="a" style="left:1460px;top:857px;width:36px;text-align:center;line-height:30px;font-size:13px;font-weight:bold;color:#111">1</div>
<div class="a" style="left:1496px;top:857px;width:36px;text-align:center;line-height:30px;font-size:13px;font-weight:bold;color:#111">···</div>
<div class="a" style="left:1531px;top:857px;width:36px;text-align:center;line-height:30px;font-size:13px;font-weight:bold;color:#111">3</div>
<div class="a" style="left:1566px;top:857px;width:36px;text-align:center;line-height:30px;font-size:13px;font-weight:bold;color:#111">4</div>
<div class="a" style="left:1602px;top:857px;width:36px;text-align:center;line-height:30px;font-size:13px;font-weight:bold;color:#111">5</div>
<div class="a" style="left:1637px;top:857px;width:36px;text-align:center;line-height:30px;font-size:13px;font-weight:bold;color:#02a9a5">6</div>
<div class="a" style="left:1673px;top:857px;width:36px;text-align:center;line-height:30px;font-size:13px;font-weight:bold;color:#111">7</div>
<div class="a" style="left:1708px;top:857px;width:36px;text-align:center;line-height:30px;font-size:13px;font-weight:bold;color:#111">8</div>
<div class="a" style="left:1760px;top:868px;width:6px;height:6px;border-right:1px solid #444;border-top:1px solid #444;transform:rotate(45deg)"></div>
<div class="a" style="left:1804px;top:862px;font-size:13px;line-height:18px;color:#333">前往</div>
<div class="a" style="left:1834px;top:857px;width:46px;height:28px;border:1px solid #d0d0d0;border-radius:3px;text-align:center;line-height:26px;font-size:13px">6</div>
<div class="a" style="left:1884px;top:862px;font-size:13px;line-height:18px;color:#333">页</div>
</body></html>
